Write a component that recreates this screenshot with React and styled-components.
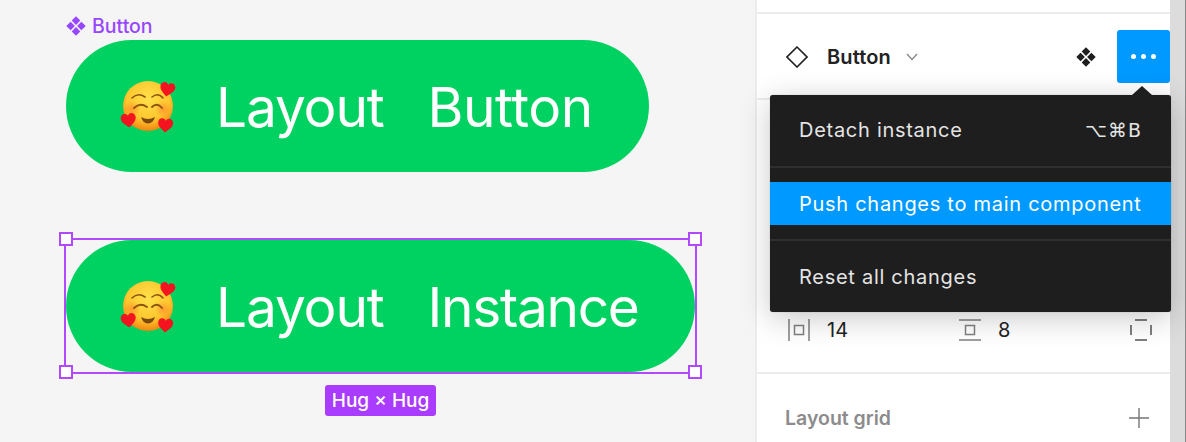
import React from 'react'
import styled, { createGlobalStyle } from 'styled-components'

const Global = createGlobalStyle`
  html, body { margin: 0; padding: 0; background: #f5f5f5; }
  body { font-family: Inter, "Noto Sans", sans-serif; overflow: hidden; }
`

const Page = styled.div`
  display: flex;
  width: 1186px;
  height: 442px;
  overflow: hidden;
`

//----------------canvas------------------------>>>//
const Canvas = styled.div`
  width: 755px;
  flex: none;
  padding: 14px 0 0 66px;
  box-sizing: border-box;
  background: #f5f5f5;
`
const ComponentLabel = styled.div`
  display: flex;
  align-items: center;
  gap: 6px;
  height: 24px;
  color: #9747ff;
  font-size: 19.5px;
  font-weight: 500;
  line-height: 24px;
  margin-bottom: 2px;
`
const Pill = styled.div`
  display: inline-flex;
  align-items: center;
  height: 132px;
  border-radius: 66px;
  background: #00d261;
  padding: 0 56.5px 0 54px;
  box-sizing: border-box;
  gap: 40px;
  color: #fff;
  font-size: 55px;
  white-space: nowrap;
`
const Words = styled.div`
  display: flex;
  gap: 44px;
  padding-top: 1px;
`
const Word = styled.span`
  letter-spacing: ${p => p.$spacing}px;
`
const Selection = styled.div`
  position: relative;
  display: inline-block;
  margin-top: 68px;
`
const SelectionBox = styled.div`
  position: absolute;
  inset: -2px;
  border: 2px solid #b14aff;
  pointer-events: none;
`
const Handle = styled.div`
  position: absolute;
  width: 14px;
  height: 14px;
  box-sizing: border-box;
  background: #fff;
  border: 2px solid #b14aff;
  ${p => (p.$right ? 'right: -7px;' : 'left: -7px;')}
  ${p => (p.$bottom ? 'bottom: -7px;' : 'top: -8px;')}
`
const SizeBadge = styled.div`
  position: absolute;
  left: 259px;
  top: 145px;
  width: 111px;
  height: 31px;
  border-radius: 3px;
  background: #a93cff;
  color: #fff;
  font-size: 19px;
  font-weight: 500;
  line-height: 31px;
  text-align: center;
  white-space: nowrap;
`

//----------------panel------------------------>>>//
const Panel = styled.div`
  position: relative;
  width: 415px;
  flex: none;
  background: #fff;
  border-left: 2px solid #ececec;
  box-sizing: border-box;
`
const TopGap = styled.div`
  height: 14px;
  box-sizing: border-box;
  border-bottom: 2px solid #ececec;
`
const InstanceRow = styled.div`
  display: flex;
  align-items: center;
  height: 86px;
  padding: 2px 0 0 29px;
  box-sizing: border-box;
  border-bottom: 2px solid #ececec;
`
const InstanceName = styled.div`
  margin-left: 19px;
  font-size: 20px;
  font-weight: 600;
  letter-spacing: 0.1px;
  color: #222;
`
const Caret = styled.svg`
  margin-left: 15px;
`
const Diamonds = styled.div`
  margin-left: auto;
  height: 20px;
`
const MoreButton = styled.div`
  width: 53px;
  height: 53px;
  margin: -1px 0 0 21px;
  border-radius: 3px;
  background: #0099ff;
  display: flex;
  align-items: center;
  justify-content: center;
  gap: 5px;
`
const Dot = styled.span`
  width: 5px;
  height: 5px;
  border-radius: 50%;
  background: #fff;
`
const Menu = styled.div`
  position: absolute;
  z-index: 2;
  left: 13px;
  top: 95px;
  width: 401px;
  height: 217px;
  padding-top: 13px;
  box-sizing: border-box;
  background: #1e1e1e;
  border-radius: 3px;
  box-shadow: 0 6px 30px rgba(0, 0, 0, 0.22), 0 0 1px rgba(0, 0, 0, 0.4);
`
const MenuArrow = styled.div`
  position: absolute;
  right: 19px;
  top: -9px;
  width: 0;
  height: 0;
  border-left: 10px solid transparent;
  border-right: 10px solid transparent;
  border-bottom: 9px solid #1e1e1e;
`
const MenuItem = styled.div`
  display: flex;
  justify-content: space-between;
  align-items: center;
  height: 43px;
  padding: 0 29px;
  font-size: 20px;
  letter-spacing: 0.72px;
  white-space: nowrap;
  color: ${p => (p.$active ? '#fff' : '#e4e4e4')};
  background: ${p => (p.$active ? '#0099ff' : 'transparent')};
`
const MenuRule = styled.div`
  height: 2px;
  background: #2f2f2f;
  margin: ${p => p.$margin};
`
const Shortcut = styled.span`
  letter-spacing: 1px;
  font-family: "DejaVu Sans", sans-serif;
  font-size: 19px;
`
const PaddingRow = styled.div`
  display: flex;
  align-items: center;
  height: 86px;
  margin-top: 188px;
  padding: 0 18px 0 31px;
  box-sizing: border-box;
  border-bottom: 2px solid #ececec;
`
const PaddingField = styled.div`
  display: flex;
  align-items: center;
  gap: 17px;
  width: ${p => p.$width}px;
  font-size: 20px;
  color: #222;
`
const PaddingAll = styled.svg`
  margin-left: auto;
`
const GridRow = styled.div`
  display: flex;
  align-items: center;
  justify-content: space-between;
  height: 88px;
  padding: 0 21px 0 28px;
  font-size: 19.5px;
  font-weight: 600;
  color: #8c8c8c;
`
const Scrollbar = styled.div`
  position: relative;
  z-index: 1;
  width: 15px;
  flex: none;
  background: #dcdcdc;
`
const ScrollEdge = styled.div`
  width: 1px;
  flex: none;
  background: #8a8a8a;
`

// smiling face with hearts, drawn since no colour emoji font is installed
const Heart = ({ x, y, rot = 0 }) => (
  <path
    transform={`translate(${x} ${y}) rotate(${rot})`}
    d="M0 7.5 C-3 4.8 -7.5 2 -7.5 -2 C-7.5 -5 -5.5 -6.5 -3.6 -6.5 C-2 -6.5 -.7 -5.6 0 -4.2 C.7 -5.6 2 -6.5 3.6 -6.5 C5.5 -6.5 7.5 -5 7.5 -2 C7.5 2 3 4.8 0 7.5 Z"
    fill="#f3141f"
  />
)

const Emoji = () => (
  <svg width="56" height="56" viewBox="0 0 56 56" style={{ flex: 'none' }}>
    <defs>
      <radialGradient id="face" cx="50%" cy="35%" r="65%">
        <stop offset="0%" stopColor="#ffe14a" />
        <stop offset="65%" stopColor="#ffc62e" />
        <stop offset="100%" stopColor="#ef8512" />
      </radialGradient>
      <radialGradient id="blush" cx="50%" cy="50%" r="50%">
        <stop offset="0%" stopColor="#ff7a30" stopOpacity="0.6" />
        <stop offset="100%" stopColor="#ff7a30" stopOpacity="0" />
      </radialGradient>
    </defs>
    <circle cx="28" cy="28" r="25" fill="url(#face)" />
    <circle cx="43" cy="31" r="8" fill="url(#blush)" />
    <circle cx="12" cy="31" r="8" fill="url(#blush)" />
    <g fill="none" stroke="#8a5410" strokeLinecap="round">
      <path d="M12 20 Q18 14 25 19" strokeWidth="1.6" />
      <path d="M32 19 Q38 14 43 20" strokeWidth="1.6" />
      <path d="M14 30 Q20 24 27 29" strokeWidth="1.8" />
      <path d="M32 29 Q37 24 42 30" strokeWidth="1.8" />
    </g>
    <path d="M21 39 Q28 43 35 39 Q33 45.5 28 45.5 Q23 45.5 21 39 Z" fill="#7a4a0c" />
    <Heart x={47.5} y={11} rot={10} />
    <Heart x={8.5} y={42} rot={-8} />
    <Heart x={45.5} y={47} rot={4} />
  </svg>
)

const ComponentGlyph = ({ size, color }) => (
  <svg width={size} height={size} viewBox="0 0 20 20" fill={color}>
    <path d="M10 .3 L14.3 4.6 L10 8.9 L5.7 4.6 Z" />
    <path d="M10 11.1 L14.3 15.4 L10 19.7 L5.7 15.4 Z" />
    <path d="M4.6 5.7 L8.9 10 L4.6 14.3 L.3 10 Z" />
    <path d="M15.4 5.7 L19.7 10 L15.4 14.3 L11.1 10 Z" />
  </svg>
)

const Pad = ({ vertical }) => (
  <svg width="22" height="22" viewBox="0 0 22 22" fill="none" stroke="#808080" strokeWidth="1.5">
    {vertical ? (
      <path d="M0 1 H22 M0 21 H22" />
    ) : (
      <path d="M1 0 V22 M21 0 V22" />
    )}
    <rect x="6.5" y="6.5" width="9" height="9" />
  </svg>
)

export default function App() {
  return (
    <Page>
      <Global />
      <Canvas>
        <ComponentLabel>
          <ComponentGlyph size={20} color="#9747ff" />
          Button
        </ComponentLabel>
        <Pill>
          <Emoji />
          <Words>
            <Word $spacing={-1.15}>Layout</Word>
            <Word $spacing={-0.5}>Button</Word>
          </Words>
        </Pill>
        <Selection>
          <Pill>
            <Emoji />
            <Words>
              <Word $spacing={-1.15}>Layout</Word>
              <Word $spacing={-1.3}>Instance</Word>
            </Words>
          </Pill>
          <SelectionBox />
          <Handle />
          <Handle $right />
          <Handle $bottom />
          <Handle $right $bottom />
          <SizeBadge>Hug × Hug</SizeBadge>
        </Selection>
      </Canvas>
      <Panel>
        <TopGap />
        <InstanceRow>
          <svg width="22" height="22" viewBox="0 0 22 22" fill="none" stroke="#222" strokeWidth="1.6">
            <path d="M11 1 L21 11 L11 21 L1 11 Z" />
          </svg>
          <InstanceName>Button</InstanceName>
          <Caret width="12" height="8" viewBox="0 0 12 8" fill="none" stroke="#8a8a8a" strokeWidth="1.4">
            <path d="M1 1 L6 6.5 L11 1" />
          </Caret>
          <Diamonds>
            <ComponentGlyph size={20} color="#1e1e1e" />
          </Diamonds>
          <MoreButton>
            <Dot />
            <Dot />
            <Dot />
          </MoreButton>
        </InstanceRow>
        <Menu>
          <MenuArrow />
          <MenuItem>
            Detach instance
            <Shortcut>⌥⌘B</Shortcut>
          </MenuItem>
          <MenuRule $margin="15px 0 14px" />
          <MenuItem $active>Push changes to main component</MenuItem>
          <MenuRule $margin="14px 0 14px" />
          <MenuItem>Reset all changes</MenuItem>
        </Menu>
        <PaddingRow>
          <PaddingField $width={171}>
            <Pad />
            14
          </PaddingField>
          <PaddingField $width={100}>
            <Pad vertical />
            8
          </PaddingField>
          <PaddingAll width="22" height="22" viewBox="0 0 22 22" fill="none" stroke="#555" strokeWidth="1.5">
            <path d="M5 1 H17 M5 21 H17 M1 6 V16 M21 6 V16" />
          </PaddingAll>
        </PaddingRow>
        <GridRow>
          Layout grid
          <svg width="20" height="20" viewBox="0 0 20 20" fill="none" stroke="#777" strokeWidth="1.4">
            <path d="M10 0 V20 M0 10 H20" />
          </svg>
        </GridRow>
      </Panel>
      <Scrollbar />
      <ScrollEdge />
    </Page>
  )
}
